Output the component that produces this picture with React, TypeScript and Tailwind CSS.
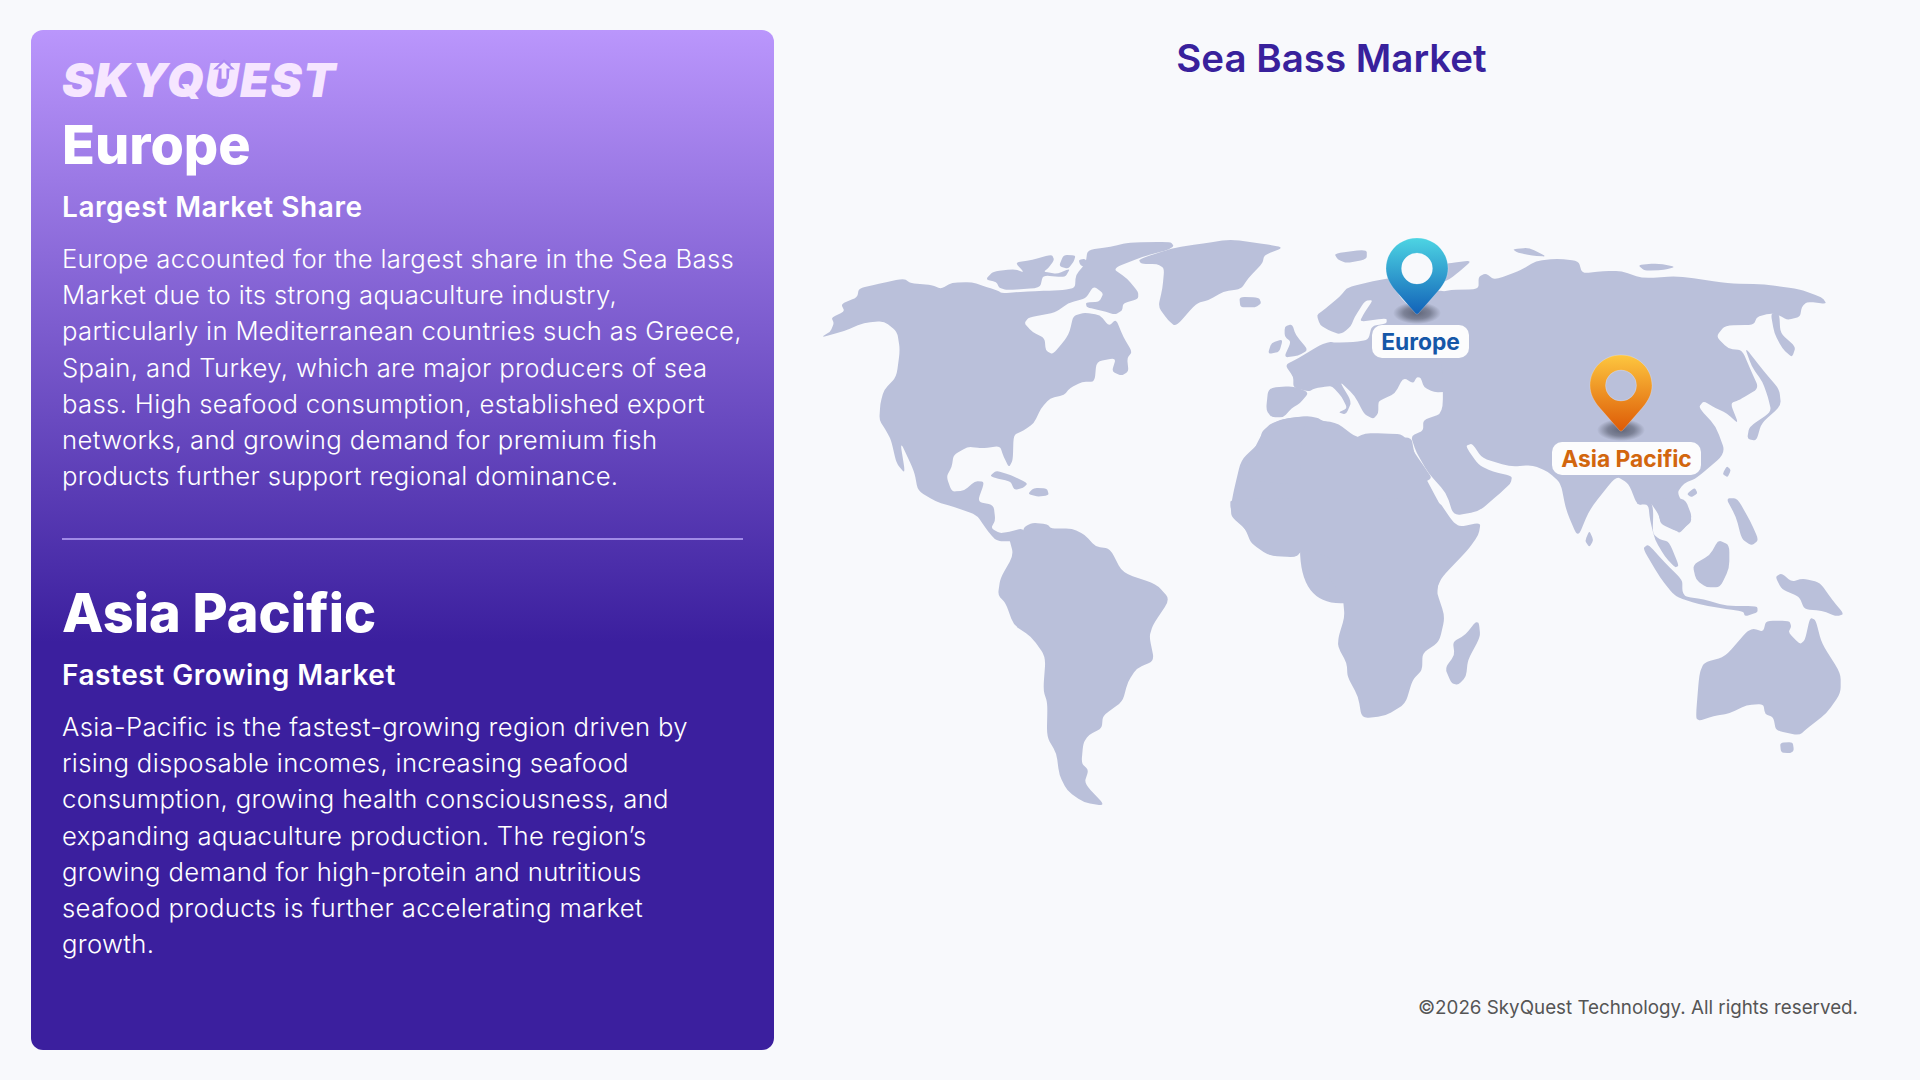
import React from "react";

const smooth = (s: string) => {
  const p = s.trim().split(/\s+/).map((t) => t.split(",").map(Number));
  const n = p.length;
  const t = 0.3;
  const lerp = (a: number[], b: number[], k: number) => [a[0] + (b[0] - a[0]) * k, a[1] + (b[1] - a[1]) * k];
  let d = "";
  for (let i = 0; i < n; i++) {
    const prev = p[(i + n - 1) % n];
    const cur = p[i];
    const next = p[(i + 1) % n];
    const a = lerp(cur, prev, t);
    const b = lerp(cur, next, t);
    d += `${i === 0 ? "M" : "L"}${a[0].toFixed(1)} ${a[1].toFixed(1)}Q${cur[0]} ${cur[1]} ${b[0].toFixed(1)} ${b[1].toFixed(1)}`;
  }
  return d + "Z";
};

const G2 = [
  // North America
  "58,412 85,395 95,370 88,352 125,335 115,312 160,292 165,265 220,252 290,235 310,250 370,255 395,267 425,248 480,246 525,262 555,272 565,280 640,274 700,272 735,270 770,264 772,225 800,190 805,150 870,140 920,128 1037,125 1047,138 1030,150 965,168 875,205 915,235 947,275 947,297 905,310 902,332 882,344 845,332 803,322 800,308 838,305 850,280 822,258 800,295 750,310 715,338 640,352 628,370 650,395 685,415 688,452 708,463 742,420 755,395 765,348 795,338 840,345 865,378 885,358 905,410 930,455 916,475 920,515 900,527 873,515 885,474 830,485 825,545 790,545 755,565 740,585 700,595 675,625 655,670 625,692 598,705 596,780 585,802 570,770 560,738 510,745 470,740 430,765 425,800 410,830 425,875 460,872 490,843 517,845 497,905 542,915 547,960 535,985 560,1000 585,995 625,985 640,1020 565,1025 545,1018 520,985 495,945 430,920 380,905 330,872 320,815 280,722 295,822 270,790 255,720 240,690 222,660 225,610 235,570 270,530 280,450 272,395 235,363 180,368 120,395",
  // Arctic islands
  "602,187 650,180 705,163 712,180 695,205 682,215 720,222 757,205 742,232 680,226 672,264 580,270 558,264 550,246 520,238 540,215 600,207 628,218",
  "725,198 738,165 772,166 766,186 750,207",
  "780,180 800,176 810,207 785,196",
  // Greenland
  "948,178 1040,145 1130,130 1205,118 1290,130 1355,142 1300,165 1295,190 1255,235 1235,267 1185,275 1145,300 1110,310 1052,380 1030,360 1003,320 1015,265 1020,205 1000,192 955,192",
  // Iceland
  "1230,290 1285,293 1292,310 1275,322 1233,322",
  // Cuba, Hispaniola
  "533,826 550,812 590,825 638,850 625,864 600,870 590,845 540,832",
  "638,882 655,863 692,866 697,886 665,890",
  // UK, Ireland
  "1357,380 1378,372 1388,405 1423,450 1395,467 1355,473 1375,425 1357,410",
  "1310,462 1320,428 1352,418 1342,456",
  // West Africa
  "1206,920 1215,870 1235,780 1285,730 1295,690 1345,658 1420,648 1490,670 1505,695 1590,720 1590,1200 1500,1100 1490,1075 1405,1050 1390,1070 1320,1067 1285,1045 1250,990 1208,950",
];

const G10 = [
  // Europe
  "160,322 160,290 135,255 175,235 240,195 270,185 282,188 340,186 385,180 395,138 440,130 440,114 358,126 375,95 399,60 375,62 343,113 333,138 310,158 295,162 265,150 240,135 230,105 248,92 300,50 322,22 400,3 462,-8 475,45 510,82 550,50 600,30 625,40 625,336 582,337 552,322 542,293 530,291 520,310 490,293 465,340 428,358 415,365 415,400 400,417 372,402 345,348 298,303 335,365 318,404 295,397 322,385 305,350 276,318 255,320 225,325 205,335",
  // Iberia
  "85,323 160,318 207,337 180,370 155,385 130,412 95,412 78,390",
  // Africa north
  "-5,610 60,470 90,430 150,413 205,408 240,415 290,460 340,477 375,460 430,460 490,463 525,520 590,615",
];

const G3 = [
  // Asia
  "340,300 410,270 500,268 500,230 520,220 545,240 620,210 660,183 720,176 780,183 790,220 850,213 900,213 960,235 1060,228 1200,250 1300,253 1400,268 1462,292 1475,312 1420,305 1405,320 1400,350 1365,360 1340,345 1318,340 1280,350 1270,375 1190,376 1165,410 1200,447 1238,450 1262,510 1285,565 1230,600 1205,610 1228,672 1195,640 1165,625 1130,603 1116,622 1165,680 1192,760 1110,835 1075,850 1055,880 1102,960 1060,997 1010,972 1005,945 980,905 945,917 920,850 885,828 810,930 778,1014 745,930 730,850 695,815 650,795 590,800 510,775 482,730 463,738 500,795 540,815 594,828 590,850 560,880 500,935 430,947 410,880 360,820 326,758 310,708 345,692 345,660 400,640 400,500",
  // Africa middle
  "0,660 100,665 160,715 250,715 312,712 320,760 340,810 395,920 425,972 440,982 502,975 495,1010 440,1060 390,1130 380,1210 0,1210",
  // Kola
  "395,195 413,190 482,181 446,215 420,237 388,252",
  // Arctic
  "96,160 187,148 187,178 130,189 105,178",
  "595,148 640,143 692,170 650,167 610,158",
  "946,195 1000,190 1052,200 1020,210 965,212",
  // Japan chain
  "1245,440 1300,515 1342,568 1347,617 1292,670 1278,722 1252,717 1258,680 1320,635 1310,590 1295,545 1265,500",
  // Kamchatka
  "1318,340 1342,340 1345,400 1388,440 1378,473 1350,445 1328,400",
  // Hainan, Taiwan, Sri Lanka
  "1183,822 1195,798 1207,810 1197,832",
  "1083,882 1105,863 1114,880 1095,892",
  "798,1022 810,992 822,1020 810,1042",
];

const G9 = [
  // Malay
  "108,12 125,-5 150,-5 160,30 158,100 178,118 207,125 237,197 225,203 195,170 165,120 150,60 145,14",
  // Indochina
  "178,-5 255,-5 278,55 240,100 225,90 185,70 175,45",
  // Sumatra Java
  "128,145 145,133 192,185 247,240 247,275 257,290 310,298 380,318 472,318 473,337 435,349 430,335 380,327 300,314 225,290 180,232",
  // Borneo
  "278,195 330,165 355,120 388,135 388,205 360,262 320,262 288,240",
  // Philippines
  "378,-5 412,-5 452,65 476,120 455,137 425,117 408,50",
  // New Guinea
  "526,230 545,220 575,245 610,235 660,248 697,300 732,342 710,349 665,332 613,328 598,290 545,268",
  // Australia
  "287,655 298,520 312,488 375,470 440,395 460,386 490,395 498,362 568,362 574,380 565,397 600,433 615,420 630,353 647,360 665,430 722,520 722,580 680,640 625,682 598,706 528,692 520,652 495,642 490,612 440,615 390,640 340,648 300,662",
  // Tasmania
  "540,728 578,726 582,752 570,760 543,757",
];

const G4 = [
  // South America
  "135,105 175,100 180,80 205,68 245,73 255,85 315,86 350,105 380,140 420,146 455,218 550,253 588,298 540,375 530,410 544,482 495,505 470,545 455,605 400,647 397,685 360,705 345,730 340,790 360,810 348,850 408,918 345,907 300,872 278,825 270,760 243,710 245,610 233,570 240,470 200,410 150,375 128,310 106,285 113,235 150,165",
  // Southern Africa
  "757,28 800,90 815,130 865,167 940,172 960,148 1042,173 1030,230 1072,290 1077,350 1060,410 1058,440 1083,490 1085,530 1115,590 1125,655 1190,648 1247,612 1267,540 1294,510 1295,460 1342,425 1358,350 1333,270 1350,230 1422,150 1452,105 1458,68 1400,80 1380,65 1335,-5 757,-5",
  // Madagascar
  "1443,366 1453,368 1457,410 1422,480 1417,530 1395,555 1376,550 1358,505 1385,465 1380,425 1415,405",
];

const Shapes = ({ list }: { list: string[] }) => (
  <>
    {list.map((s, i) => (
      <path key={i} d={smooth(s)} />
    ))}
  </>
);

const WorldMap = () => (
  <svg viewBox="805 200 1053 620" className="absolute inset-0 h-full w-full" fill="#bac0da">
    <g transform="translate(800 200) scale(.35714 .33333)"><Shapes list={G2} /></g>
    <g transform="translate(1240 280) scale(.33333)"><Shapes list={G10} /></g>
    <g transform="translate(1300 200) scale(.35714 .33333)"><Shapes list={G3} /></g>
    <g transform="translate(1600 500) scale(.33333)"><Shapes list={G9} /></g>
    <g transform="translate(960 500) scale(.35714 .33333)"><Shapes list={G4} /></g>
  </svg>
);

const Pin = ({ id, top, bottom, className }: { id: string; top: string; bottom: string; className: string }) => (
  <svg viewBox="0 0 80 100" className={className}>
    <defs>
      <linearGradient id={id} x1="0" y1="0" x2="0" y2="1">
        <stop offset="0" stopColor={top} />
        <stop offset="1" stopColor={bottom} />
      </linearGradient>
      <radialGradient id={id + "s"}>
        <stop offset="0" stopColor="#4a4f60" stopOpacity=".8" />
        <stop offset=".55" stopColor="#4a4f60" stopOpacity=".55" />
        <stop offset="1" stopColor="#4a4f60" stopOpacity="0" />
      </radialGradient>
    </defs>
    <ellipse cx="40" cy="78" rx="24" ry="11" fill={`url(#${id}s)`} />
    <path
      fillRule="evenodd"
      fill={`url(#${id})`}
      stroke="#ffffff"
      strokeOpacity=".35"
      strokeWidth=".6"
      d="M40 3C57.5 3 71 16.5 71 33.500C71 42 67 49 62 55L41.500 78.500Q40 80 38.500 78.500L18 55C13 49 9 42 9 33.500C9 16.500 22.500 3 40 3ZM40 18A15.500 15.500 0 1 0 40 49A15.500 15.500 0 1 0 40 18Z"
    />
  </svg>
);

const Body = ({ lines }: { lines: string[] }) => (
  <p className="text-[25.7px] leading-[36.2px] font-light tracking-[0.33px] text-white">
    {lines.map((l) => (
      <span key={l} className="block whitespace-nowrap">{l}</span>
    ))}
  </p>
);

export default function App() {
  return (
    <div className="flex h-[1080px] w-full overflow-hidden bg-[#f8f9fc] pt-[30px] pl-[31px] [font-family:Inter,sans-serif]">
      <aside className="h-[1020px] w-[743px] shrink-0 rounded-[12px] bg-[linear-gradient(180deg,#ba96fc_0%,#3b1f9e_60%,#3b1f9e_100%)] px-[31px] pt-[25px]">
        <div className="relative h-[50px] text-[47px] leading-[50px] font-black tracking-[1.3px] text-[#f6e6ff] italic">
          SKYQUEST
          <svg viewBox="0 0 18 16" className="absolute top-[4px] left-[151px] h-[20px] w-[22px]">
            <path d="M9 0L18 8.500H13V16H5V8.500H0Z" fill="#ab88f3" />
            <path d="M9 2.500L14.500 7.500H11V16H7V7.500H3.500Z" fill="#f6e6ff" />
          </svg>
        </div>
        <h1 className="mt-[8px] text-[54px] leading-[64px] font-extrabold text-white">Europe</h1>
        <h2 className="mt-[10px] text-[28px] leading-[40px] font-semibold tracking-[0.55px] text-white">Largest Market Share</h2>
        <div className="mt-[14px]">
          <Body
            lines={[
              "Europe accounted for the largest share in the Sea Bass",
              "Market due to its strong aquaculture industry,",
              "particularly in Mediterranean countries such as Greece,",
              "Spain, and Turkey, which are major producers of sea",
              "bass. High seafood consumption, established export",
              "networks, and growing demand for premium fish",
              "products further support regional dominance.",
            ]}
          />
        </div>
        <div className="mt-[44px] h-[1.5px] bg-[#a08ae6]" />
        <h1 className="mt-[41px] text-[54px] leading-[64px] font-extrabold text-white">Asia Pacific</h1>
        <h2 className="mt-[10px] text-[28px] leading-[40px] font-semibold tracking-[0.55px] text-white">Fastest Growing Market</h2>
        <div className="mt-[14px]">
          <Body
            lines={[
              "Asia-Pacific is the fastest-growing region driven by",
              "rising disposable incomes, increasing seafood",
              "consumption, growing health consciousness, and",
              "expanding aquaculture production. The region’s",
              "growing demand for high-protein and nutritious",
              "seafood products is further accelerating market",
              "growth.",
            ]}
          />
        </div>
      </aside>
      <main className="ml-[31px] flex w-[1053px] shrink-0 flex-col">
        <h2 className="pt-[6px] text-center text-[38.5px] leading-[44px] font-semibold text-[#38219c]">Sea Bass Market</h2>
        <div className="relative mt-[120px] h-[620px] w-[1053px]">
          <WorldMap />
          <Pin id="pe" top="#4dd4e3" bottom="#1262b8" className="absolute top-[35px] left-[572px] h-[100px] w-[80px]" />
          <div className="absolute top-[125px] left-[567px] flex h-[33px] w-[97px] items-center justify-center rounded-[10px] bg-white/95 pt-[1px] text-[22.8px] font-bold text-[#1557a8]">Europe</div>
          <Pin id="pa" top="#fdc63f" bottom="#dd5a06" className="absolute top-[152px] left-[776px] h-[100px] w-[80px]" />
          <div className="absolute top-[242px] left-[747px] flex h-[33px] w-[149px] items-center justify-center rounded-[10px] bg-white/95 pt-[1px] text-[22.8px] font-bold text-[#d2660e]">Asia Pacific</div>
        </div>
        <p className="mt-[174px] text-right text-[18.8px] leading-[28px] text-[#555]">©2026 SkyQuest Technology. All rights reserved.</p>
      </main>
    </div>
  );
}
